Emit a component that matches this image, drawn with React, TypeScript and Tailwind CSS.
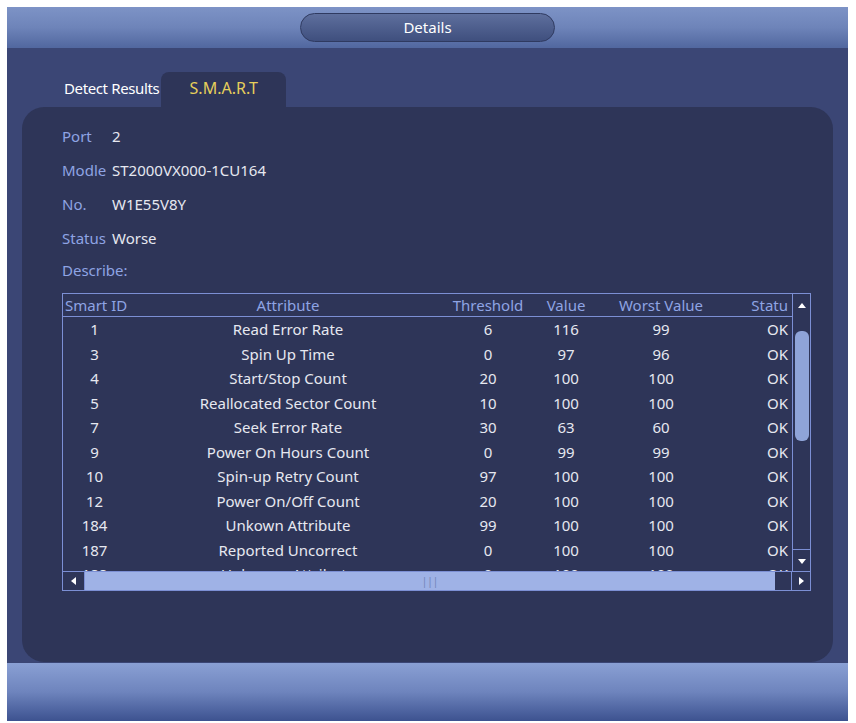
import React from 'react';

const rows: [string, string, string, string, string, string][] = [
  ['1', 'Read Error Rate', '6', '116', '99', 'OK'],
  ['3', 'Spin Up Time', '0', '97', '96', 'OK'],
  ['4', 'Start/Stop Count', '20', '100', '100', 'OK'],
  ['5', 'Reallocated Sector Count', '10', '100', '100', 'OK'],
  ['7', 'Seek Error Rate', '30', '63', '60', 'OK'],
  ['9', 'Power On Hours Count', '0', '99', '99', 'OK'],
  ['10', 'Spin-up Retry Count', '97', '100', '100', 'OK'],
  ['12', 'Power On/Off Count', '20', '100', '100', 'OK'],
  ['184', 'Unkown Attribute', '99', '100', '100', 'OK'],
  ['187', 'Reported Uncorrect', '0', '100', '100', 'OK'],
  ['188', 'Unknown Attribute', '0', '100', '100', 'OK'],
];

const info = [
  ['Port', '2'],
  ['Modle', 'ST2000VX000-1CU164'],
  ['No.', 'W1E55V8Y'],
  ['Status', 'Worse'],
];

const cols = 'grid grid-cols-[75px_300px_100px_56px_134px_60px]';

function Tri({ dir }: { dir: 'up' | 'down' | 'left' | 'right' }) {
  const pts = {
    up: '1,7 5,2 9,7',
    down: '1,3 5,8 9,3',
    left: '7,1 2,5 7,9',
    right: '3,1 8,5 3,9',
  }[dir];
  return (
    <svg width="10" height="10" viewBox="0 0 10 10">
      <polygon points={pts} fill="#ffffff" />
    </svg>
  );
}

export default function App() {
  return (
    <div className="w-[856px] h-[723px] bg-white pl-[7px] pr-[8px] pt-[7px] pb-[2px] font-['Liberation_Sans']">
      <div className="h-full flex flex-col bg-[#3b4675]">
        <div className="h-[41px] flex items-center justify-center bg-gradient-to-b from-[#7d93c6] via-[#6e84b9] to-[#51679f]">
          <div className="w-[255px] h-[29px] rounded-full bg-gradient-to-b from-[#5e6f9d] to-[#3f4f7e] border border-[#2f3a60] flex items-center justify-center text-[15px] text-white">
            Details
          </div>
        </div>
        <div className="flex items-end pl-[57px] pt-[18px] h-[59px] text-[15px]">
          <div className="text-white pb-[8px] tracking-tight">Detect Results</div>
          <div className="ml-[2px] w-[125px] h-[35px] rounded-t-lg bg-[#2e3558] text-[#e6cf5b] flex items-center justify-center pb-[4px] text-[16px]">S.M.A.R.T</div>
        </div>
        <div className="mx-[15px] h-[555px] rounded-[22px] bg-[#2e3558] px-[40px] pt-[12px] text-[15px]">
          {info.map(([k, v]) => (
            <div key={k} className="flex h-[34px] items-center">
              <span className="w-[50px] text-[#8fa4e4]">{k}</span>
              <span className="text-[#e6e8f0]">{v}</span>
            </div>
          ))}
          <div className="h-[30px] flex items-center text-[#8fa4e4]">Describe:</div>
          <div className="mt-[8px] w-[749px] h-[298px] border border-[#7c8fd4] flex flex-col">
            <div className="flex flex-1 min-h-0">
              <div className="flex-1 overflow-hidden">
                <div className={`${cols} h-[23px] items-center border-b border-[#7c8fd4] text-[#8fa4e4] text-center`}>
                  <div className="text-left pl-[2px]">Smart ID</div>
                  <div>Attribute</div>
                  <div>Threshold</div>
                  <div>Value</div>
                  <div>Worst Value</div>
                  <div className="text-right">Statu</div>
                </div>
                {rows.map((r) => (
                  <div key={r[0]} className={`${cols} h-[24.5px] items-center text-[#e6e8f0] text-center`}>
                    <div className="pr-[12px]">{r[0]}</div>
                    <div>{r[1]}</div>
                    <div>{r[2]}</div>
                    <div>{r[3]}</div>
                    <div>{r[4]}</div>
                    <div className="text-right">{r[5]}</div>
                  </div>
                ))}
              </div>
              <div className="w-[18px] border-l border-[#7c8fd4] flex flex-col items-center">
                <div className="h-[23px] flex items-center"><Tri dir="up" /></div>
                <div className="mt-[14px] w-[14px] h-[110px] rounded-md bg-[#8fa4d8]" />
                <div className="flex-1" />
                <div className="h-[22px] w-full border-t border-[#7c8fd4] flex items-center justify-center"><Tri dir="down" /></div>
              </div>
            </div>
            <div className="h-[19px] flex border-t border-[#7c8fd4]">
              <div className="w-[22px] flex items-center justify-center border-r border-[#7c8fd4]"><Tri dir="left" /></div>
              <div className="w-[690px] bg-[#9fb2e6] flex items-center justify-center text-[#6f82b8] text-[10px]">|||</div>
              <div className="flex-1 border-r border-[#7c8fd4]" />
              <div className="w-[18px] flex items-center justify-center"><Tri dir="right" /></div>
            </div>
          </div>
        </div>
        <div className="mt-auto h-[58px] bg-gradient-to-b from-[#8aa0d4] via-[#6e84bd] to-[#3d5290]" />
      </div>
    </div>
  );
}
